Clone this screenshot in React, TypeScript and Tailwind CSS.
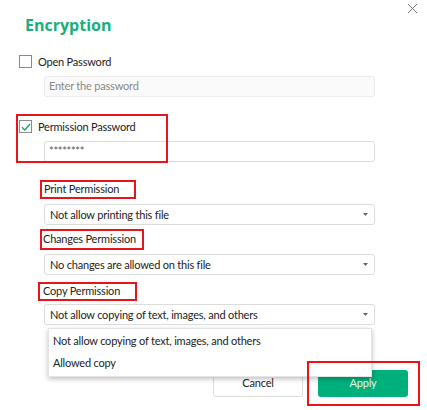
import React from 'react';

const Caret = () => (
  <svg width="5" height="3" viewBox="0 0 5 3" className="shrink-0">
    <path d="M0 0h5L2.5 3z" fill="#666" />
  </svg>
);

interface SelectProps {
  value: string;
}

const SelectBox: React.FC<SelectProps> = ({ value }) => (
  <div className="ml-[25px] w-[331px] h-[21px] flex items-center justify-between pl-[5px] pr-[6px] border border-[#dcdcdc] rounded-[3px] bg-white">
    <span className="leading-[19px] text-[#222] whitespace-nowrap">{value}</span>
    <Caret />
  </div>
);

interface CheckProps {
  checked?: boolean;
  label: string;
}

const CheckRow: React.FC<CheckProps> = ({ checked = false, label }) => (
  <div className="flex items-center h-[13px] gap-[6px]">
    <div className="w-[13px] h-[13px] border border-[#8a8a8a] bg-white flex items-center justify-center">
      {checked && (
        <svg width="10" height="8" viewBox="0 0 10 8">
          <path d="M1 4.2L3.8 7L9 1" stroke="#1aa86f" strokeWidth="1.4" fill="none" />
        </svg>
      )}
    </div>
    <span className="leading-[13px] text-[#222] whitespace-nowrap">{label}</span>
  </div>
);

export default function App() {
  return (
    <div className="relative w-[427px] h-[410px] bg-white overflow-hidden font-['Lato',sans-serif] text-[11px] tracking-[-0.2px]">
      {/* close */}
      <button className="absolute left-[407px] top-[3px] w-[11px] h-[11px]">
        <svg width="11" height="11" viewBox="0 0 11 11">
          <path d="M1 1l9 9M10 1l-9 9" stroke="#777" strokeWidth="1" />
        </svg>
      </button>

      <div className="pl-[19px] pt-[12px] flex flex-col">
        <h1 className="ml-[6px] text-[16px] leading-[26px] font-bold tracking-normal text-[#17b07a] font-['Open_Sans',sans-serif]">Encryption</h1>

        <div className="mt-[17px]">
          <CheckRow label="Open Password" />
        </div>
        <div className="mt-[8px] ml-[25px] w-[331px] h-[21px] flex items-center pl-[4px] border border-[#ececec] rounded-[3px] bg-[#fafafa]">
          <span className="text-[#888]">Enter the password</span>
        </div>

        <div className="mt-[23px]">
          <CheckRow checked label="Permission Password" />
        </div>
        <div className="mt-[8px] ml-[25px] w-[331px] h-[21px] flex items-center pl-[4px] border border-[#dcdcdc] rounded-[3px] bg-white">
          <span className="text-[#555] text-[11px] tracking-[-0.3px]">********</span>
        </div>

        <div className="mt-[18px] ml-[21px] w-[96px] h-[19px] flex items-center pl-[2px] border-2 border-[#e8141c] whitespace-nowrap">
          <span className="text-[#222]">Print Permission</span>
        </div>
        <div className="mt-[5px]">
          <SelectBox value="Not allow printing this file" />
        </div>

        <div className="mt-[4px] ml-[21px] w-[104px] h-[21px] flex items-center pl-[1px] border-2 border-[#e8141c] whitespace-nowrap">
          <span className="text-[#222]">Changes Permission</span>
        </div>
        <div className="mt-[4px]">
          <SelectBox value="No changes are allowed on this file" />
        </div>

        <div className="mt-[7px] ml-[19px] w-[99px] h-[19px] flex items-center pl-[3px] border-2 border-[#e8141c] whitespace-nowrap">
          <span className="text-[#222]">Copy Permission</span>
        </div>
        <div className="mt-[3px]">
          <SelectBox value="Not allow copying of text, images, and others" />
        </div>

        <div className="mt-[45px] pr-[19px] flex justify-end gap-[15px]">
          <button className="w-[90px] h-[27px] border border-[#dcdcdc] rounded-[3px] bg-white text-[#222]">Cancel</button>
          <button className="w-[90px] h-[27px] rounded-[3px] bg-[#00b07c] text-[#e6f7f0]">Apply</button>
        </div>
      </div>

      {/* open dropdown */}
      <div className="absolute left-[48px] top-[328px] w-[324px] h-[49px] bg-white border border-[#e4e4e4] shadow-[0_2px_5px_rgba(0,0,0,0.25)] flex flex-col pt-[1px]">
        <div className="h-[22px] flex items-center pl-[4px] text-[#222] whitespace-nowrap">Not allow copying of text, images, and others</div>
        <div className="h-[22px] flex items-center pl-[4px] text-[#222]">Allowed copy</div>
      </div>

      {/* annotation boxes */}
      <div className="absolute left-[16px] top-[114px] w-[152px] h-[49px] border-2 border-[#e8141c] pointer-events-none" />
      <div className="absolute left-[307px] top-[361px] w-[113px] h-[45px] border-2 border-[#e8141c] pointer-events-none" />
    </div>
  );
}
